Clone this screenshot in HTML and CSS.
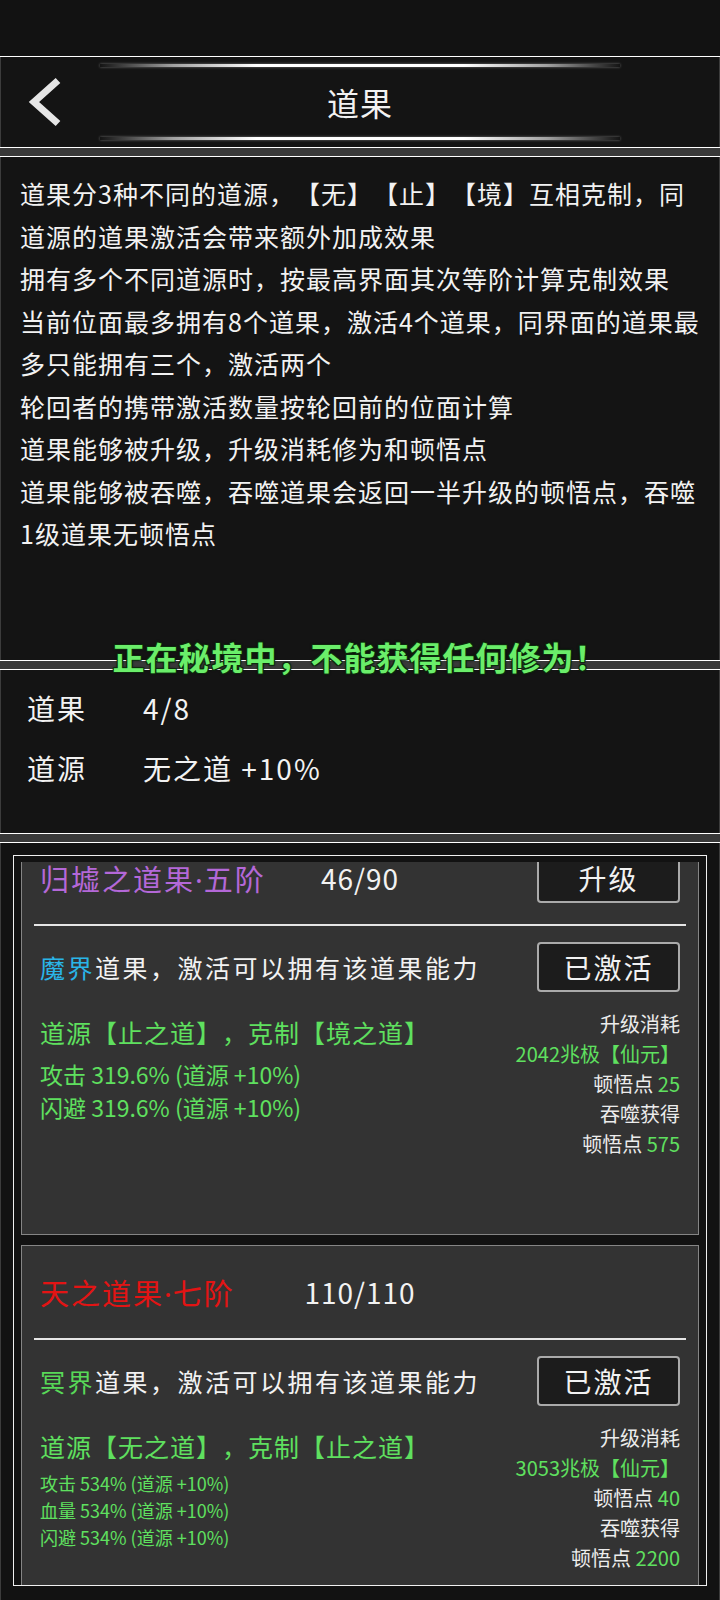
FILE: index.html
```html
<!DOCTYPE html>
<html lang="zh-CN">
<head>
    <meta charset="UTF-8">
    <title>道果</title>
    <link rel="stylesheet" href="styles.css">
</head>
<body>
<div class="status"></div>
<div class="header panel">
    <div class="glow"></div>
    <div class="bar">
        <svg class="back" width="40" height="52" viewBox="0 0 40 52">
            <polyline points="34,4.5 10,26 34,47.5" fill="none" stroke="#e6e6e6" stroke-width="7"/>
        </svg>
        <div class="title">道果</div>
    </div>
    <div class="glow"></div>
</div>
<div class="sep"></div>
<div class="desc panel">
    <p>道果分3种不同的道源，【无】【止】【境】互相克制，同道源的道果激活会带来额外加成效果</p>
    <p>拥有多个不同道源时，按最高界面其次等阶计算克制效果</p>
    <p>当前位面最多拥有8个道果，激活4个道果，同界面的道果最多只能拥有三个，激活两个</p>
    <p>轮回者的携带激活数量按轮回前的位面计算</p>
    <p>道果能够被升级，升级消耗修为和顿悟点</p>
    <p>道果能够被吞噬，吞噬道果会返回一半升级的顿悟点，吞噬1级道果无顿悟点</p>
    <div class="toast">正在秘境中，不能获得任何修为<span class="mark">！</span></div>
</div>
<div class="sep"></div>
<div class="info panel">
    <div class="info-row"><span class="label">道果</span><span>4/8</span></div>
    <div class="info-row"><span class="label">道源</span><span>无之道 +10%</span></div>
</div>
<div class="sep"></div>
<div class="list panel">
    <div class="frame">
        <div class="viewport">
            <div class="cards">
                <div class="card card-lg">
                    <div class="card-head">
                        <span class="name purple">归墟之道果<span class="dot">·</span>五阶</span>
                        <span class="count">46/90</span>
                        <button class="btn">升级</button>
                    </div>
                    <div class="card-line"></div>
                    <div class="card-row">
                        <span><span class="cyan">魔界</span>道果，激活可以拥有该道果能力</span>
                        <button class="btn">已激活</button>
                    </div>
                    <div class="card-body">
                        <div class="attrs">
                            <div class="origin">道源【止之道】，克制【境之道】</div>
                            <div class="stats">
                                <div>攻击 319.6% (道源 +10%)</div>
                                <div>闪避 319.6% (道源 +10%)</div>
                            </div>
                        </div>
                        <div class="cost">
                            <div>升级消耗</div>
                            <div class="green">2042兆极【仙元】</div>
                            <div>顿悟点 <span class="green">25</span></div>
                            <div>吞噬获得</div>
                            <div>顿悟点 <span class="green">575</span></div>
                        </div>
                    </div>
                </div>
                <div class="card">
                    <div class="card-head">
                        <span class="name red">天之道果<span class="dot">·</span>七阶</span>
                        <span class="count">110/110</span>
                    </div>
                    <div class="card-line"></div>
                    <div class="card-row">
                        <span><span class="lime">冥界</span>道果，激活可以拥有该道果能力</span>
                        <button class="btn">已激活</button>
                    </div>
                    <div class="card-body">
                        <div class="attrs">
                            <div class="origin">道源【无之道】，克制【止之道】</div>
                            <div class="stats small">
                                <div>攻击 534% (道源 +10%)</div>
                                <div>血量 534% (道源 +10%)</div>
                                <div>闪避 534% (道源 +10%)</div>
                            </div>
                        </div>
                        <div class="cost">
                            <div>升级消耗</div>
                            <div class="green">3053兆极【仙元】</div>
                            <div>顿悟点 <span class="green">40</span></div>
                            <div>吞噬获得</div>
                            <div>顿悟点 <span class="green">2200</span></div>
                        </div>
                    </div>
                </div>
            </div>
        </div>
    </div>
</div>
</body>
</html>
```

FILE: styles.css
```css
html,body{
    margin: 0;
    padding: 0;
    overflow: hidden;
}
body{
    width: 720px;
    height: 1600px;
    background: #121212;
    color: #f2f2f2;
    font-family: "Noto Sans CJK SC", sans-serif;
    /*标点不要挤在一起*/
    text-spacing-trim: space-all;
}
p{
    margin: 0;
}
.status{
    height: 56px;
    border-bottom: 1px solid #fff;
}
.panel{
    box-sizing: border-box;
    border-left: 1px solid #3c3c3c;
    border-right: 1px solid #3c3c3c;
    background: #141414;
}
/*分隔条：白线+灰条+白线*/
.sep{
    height: 8px;
    background: #393939;
    border-top: 1px solid #fff;
    border-bottom: 1px solid #fff;
}

/*顶部标题栏*/
.header{
    display: flex;
    flex-direction: column;
    height: 90px;
    padding: 7px 0;
}
.glow{
    width: 520px;
    height: 3px;
    margin: 0 auto;
    background: linear-gradient(to right, rgba(255,255,255,0), rgba(255,255,255,0.6) 14%, #fff 30%, #fff 70%, rgba(255,255,255,0.6) 86%, rgba(255,255,255,0));
    box-shadow: 0 0 3px rgba(255,255,255,0.4);
}
.bar{
    flex: 1;
    display: grid;
    grid-template-columns: 1fr auto 1fr;
    align-items: center;
}
.back{
    display: block;
    margin-left: 23px;
}
.title{
    font-size: 32px;
    letter-spacing: 1px;
}

/*说明文字*/
.desc{
    position: relative;
    height: 503px;
    padding: 15px 15px 0 19px;
    font-size: 25px;
    letter-spacing: 1px;
    line-height: 42.5px;
}
.toast{
    position: absolute;
    left: 0;
    right: 0;
    bottom: -16px;
    text-align: center;
    line-height: 40px;
    font-size: 32px;
    font-weight: bold;
    letter-spacing: 1px;
    color: #6aee6a;
    text-shadow: 1px 1px 0 #0c2a0c, -1px -1px 0 #0c2a0c, 1px -1px 0 #0c2a0c, -1px 1px 0 #0c2a0c, 0 0 3px #000;
}
/*感叹号居中一点*/
.toast .mark{
    font-family: "Noto Sans CJK JP", sans-serif;
}

/*道果数量*/
.info{
    height: 163px;
    padding: 8px 0 0 26px;
    font-size: 28px;
    letter-spacing: 2px;
}
.info-row{
    display: grid;
    grid-template-columns: 116px auto;
    line-height: 60px;
}

/*道果列表*/
.list{
    height: 757px;
    padding-top: 12px;
    background: #121212;
}
.frame{
    margin: 0 12px;
    padding: 6px 7px 0;
    border: 1px solid #f0f0f0;
}
.viewport{
    height: 723px;
    overflow: hidden;
}
.cards{
    display: flex;
    flex-direction: column;
    gap: 10px;
    /*列表已经往下滚了一点*/
    margin-top: -31px;
}
.card{
    background: #333;
    border: 1px solid #858585;
    padding: 0 18px 12px;
}
.card-head{
    height: 92px;
    display: grid;
    grid-template-columns: 1fr auto 1fr;
    align-items: center;
}
.name{
    font-size: 29px;
    letter-spacing: 2px;
    white-space: nowrap;
}
.name .dot{
    font-family: "Noto Sans", sans-serif;
    letter-spacing: 1px;
}
.count{
    font-size: 28px;
    letter-spacing: 1px;
}
.btn{
    justify-self: end;
    width: 143px;
    height: 50px;
    box-sizing: border-box;
    padding: 0;
    border: 2px solid #aaa;
    border-radius: 4px;
    background: #1c1c1c;
    color: #f2f2f2;
    font-family: inherit;
    font-size: 28px;
    letter-spacing: 2px;
    line-height: 46px;
}
.card-line{
    height: 2px;
    margin: 0 -6px;
    background: #e6e6e6;
}
.card-row{
    display: flex;
    justify-content: space-between;
    align-items: center;
    padding-top: 16px;
    font-size: 25px;
    letter-spacing: 2.5px;
}
.card-body{
    display: flex;
    justify-content: space-between;
    margin-top: 17px;
}
.card-lg .card-body{
    min-height: 213px;
}
.origin{
    margin-top: 5px;
    font-size: 25px;
    letter-spacing: 1px;
    line-height: 36px;
    color: #5fe05f;
}
.stats{
    margin-top: 8px;
    font-size: 23px;
    line-height: 33px;
    color: #5fe05f;
}
.stats.small{
    margin-top: 6px;
    font-size: 18px;
    line-height: 27px;
}
.cost{
    text-align: right;
    font-size: 20px;
    line-height: 30px;
    color: #ececec;
}

/*文字颜色*/
.purple{
    color: #b468d8;
}
.red{
    color: #e31414;
}
.cyan{
    color: #2ab5e8;
}
.lime{
    color: #58d858;
}
.green{
    color: #5fe05f;
}
```
